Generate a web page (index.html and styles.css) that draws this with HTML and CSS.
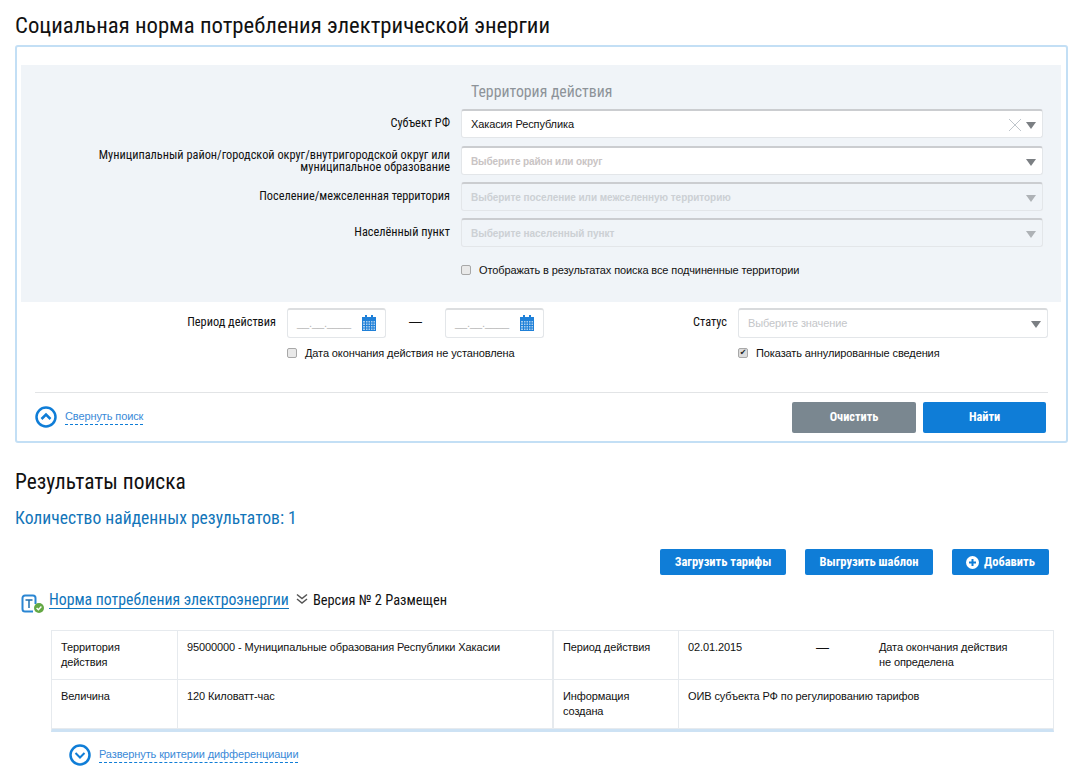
FILE: index.html
```html
<!DOCTYPE html>
<html lang="ru">
<head>
<meta charset="utf-8">
<title>Социальная норма потребления электрической энергии</title>
<link rel="stylesheet" href="styles.css">
</head>
<body>
<h1 class="page-title">Социальная норма потребления электрической энергии</h1>
<section class="search-panel">
  <div class="territory">
    <h2 class="territory-title">Территория действия</h2>
    <div class="form-row">
      <label class="row-label">Субъект РФ</label>
      <div class="select select-value"><span>Хакасия Республика</span>
        <svg class="clear-x" width="14" height="14" viewBox="0 0 14 14"><path d="M1 1l12 12M13 1L1 13" stroke="#bfc6cc" stroke-width="1" fill="none"/></svg>
        <i class="caret"></i></div>
    </div>
    <div class="form-row row-short">
      <label class="row-label label-two">Муниципальный район/городской округ/внутригородской округ или<br>муниципальное образование</label>
      <div class="select select-active"><span>Выберите район или округ</span><i class="caret"></i></div>
    </div>
    <div class="form-row">
      <label class="row-label">Поселение/межселенная территория</label>
      <div class="select select-off"><span>Выберите поселение или межселенную территорию</span><i class="caret caret-off"></i></div>
    </div>
    <div class="form-row">
      <label class="row-label">Населённый пункт</label>
      <div class="select select-off"><span>Выберите населенный пункт</span><i class="caret caret-off"></i></div>
    </div>
    <label class="check check-territory"><i class="box"></i>Отображать в результатах поиска все подчиненные территории</label>
  </div>
  <div class="period-grid">
    <div class="period-col">
      <div class="period-row">
        <label class="period-label">Период действия</label>
        <div class="date"><span class="mask">__.__.____</span>
          <svg class="cal" width="14" height="16" viewBox="0 0 14 16"><path d="M0 2h14v14H0z" fill="#1f80d8"/><path d="M3 0h2v3H3zM9 0h2v3H9z" fill="#1f80d8"/><path d="M1 6h12v9H1z" fill="#a9cdee"/><path d="M1 8h12M1 10.500h12M1 13h12M3.500 6v9M6 6v9M8.500 6v9M11 6v9" stroke="#1f80d8" stroke-width="1"/></svg></div>
        <span class="dash">—</span>
        <div class="date"><span class="mask">__.__.____</span>
          <svg class="cal" width="14" height="16" viewBox="0 0 14 16"><path d="M0 2h14v14H0z" fill="#1f80d8"/><path d="M3 0h2v3H3zM9 0h2v3H9z" fill="#1f80d8"/><path d="M1 6h12v9H1z" fill="#a9cdee"/><path d="M1 8h12M1 10.500h12M1 13h12M3.500 6v9M6 6v9M8.500 6v9M11 6v9" stroke="#1f80d8" stroke-width="1"/></svg></div>
      </div>
      <label class="check check-period"><i class="box"></i>Дата окончания действия не установлена</label>
    </div>
    <div class="status-col">
      <div class="status-row">
        <label class="status-label">Статус</label>
        <div class="select select-status"><span>Выберите значение</span><i class="caret"></i></div>
      </div>
      <label class="check check-status"><i class="box box-on">✔</i>Показать аннулированные сведения</label>
    </div>
  </div>
  <div class="panel-foot">
    <a class="toggle toggle-collapse">
      <svg width="22" height="22" viewBox="0 0 22 22"><circle cx="11" cy="11" r="9.500" fill="none" stroke="#0f7dd7" stroke-width="2.500"/><path d="M6.500 13l4.500-4.500 4.500 4.500" fill="none" stroke="#0f7dd7" stroke-width="2.500"/></svg>
      <span class="toggle-text">Свернуть поиск</span>
    </a>
    <div class="foot-buttons">
      <button class="btn btn-gray">Очистить</button>
      <button class="btn btn-blue">Найти</button>
    </div>
  </div>
</section>
<h2 class="results-title">Результаты поиска</h2>
<p class="results-count">Количество найденных результатов: 1</p>
<div class="actions">
  <button class="btn-small btn-load">Загрузить тарифы</button>
  <button class="btn-small btn-export">Выгрузить шаблон</button>
  <button class="btn-small btn-add">
    <svg width="13" height="13" viewBox="0 0 13 13"><circle cx="6.500" cy="6.500" r="6.500" fill="#fff"/><path d="M6.500 3v7M3 6.500h7" stroke="#0f7dd7" stroke-width="2"/></svg>
    Добавить</button>
</div>
<div class="doc-head">
  <svg class="doc-icon" width="24" height="22" viewBox="0 0 24 22"><path d="M1.500 15V4a2.500 2.500 0 0 1 2.500-2.500h8a2.500 2.500 0 0 1 2.500 2.500v6M12 17.500H4a2.500 2.500 0 0 1-2.500-2.500" fill="none" stroke="#2a86d3" stroke-width="2"/><path d="M4.500 6h7M8 6v8" fill="none" stroke="#1f6fae" stroke-width="1.500"/><circle cx="18" cy="14" r="5" fill="#64a844"/><path d="M15.600 14l1.800 1.800 3-3.200" fill="none" stroke="#fff" stroke-width="1.400"/></svg>
  <a class="doc-link">Норма потребления электроэнергии</a>
  <svg class="chevrons" width="12" height="12" viewBox="0 0 12 12"><path d="M1 1.500l5 4 5-4M1 6l5 4 5-4" fill="none" stroke="#555" stroke-width="1.500"/></svg>
  <span class="doc-version">Версия № 2 Размещен</span>
</div>
<div class="info-table">
  <div class="cell c1">Территория<br>действия</div>
  <div class="cell c2">95000000 - Муниципальные образования Республики Хакасии</div>
  <div class="cell c3">Период действия</div>
  <div class="cell c4 period-cell"><span class="p-from">02.01.2015</span><span class="p-dash">—</span><span>Дата окончания действия<br>не определена</span></div>
  <div class="cell c1">Величина</div>
  <div class="cell c2">120 Киловатт-час</div>
  <div class="cell c3">Информация<br>создана</div>
  <div class="cell c4">ОИВ субъекта РФ по регулированию тарифов</div>
</div>
<a class="toggle toggle-expand">
  <svg width="22" height="22" viewBox="0 0 22 22"><circle cx="11" cy="11" r="9.500" fill="none" stroke="#0f7dd7" stroke-width="2.500"/><path d="M6.500 9l4.500 4.500L15.500 9" fill="none" stroke="#0f7dd7" stroke-width="2"/></svg>
  <span class="toggle-text">Развернуть критерии дифференциации</span>
</a>
</body>
</html>
```
FILE: styles.css
```css
* { box-sizing: border-box; }
html, body { margin: 0; padding: 0; }
body {
  width: 1079px;
  height: 775px;
  overflow: hidden;
  background: #fff;
  color: #111;
  font-family: "Liberation Sans", Arial, sans-serif;
  font-size: 11px;
  letter-spacing: -.11px;
  padding: 12px 0 0 15px;
}
.page-title, .territory-title, .row-label, .period-label, .status-label,
.btn, .results-title, .results-count, .btn-small, .doc-link, .doc-version {
  font-family: Roboto, sans-serif;
  font-stretch: 75%;
}
.page-title {
  margin: 0 0 6px;
  font-weight: 400;
  font-size: 22.750px;
  line-height: 27px;
  letter-spacing: 0;
  color: #111;
}
.search-panel {
  width: 1053px;
  height: 398px;
  border: 2px solid #c3dff5;
  border-radius: 3px;
  padding: 18px 5px 0 4px;
}
.territory {
  height: 237px;
  background: #f0f4f8;
  padding: 17px 18px 0 0;
}
.territory-title {
  margin: 0 0 7px 450px;
  font-weight: 400;
  font-size: 15.800px;
  line-height: 20px;
  color: #8d9399;
  letter-spacing: 0;
}
.form-row {
  display: flex;
  align-items: center;
  height: 29px;
  margin-bottom: 7px;
}
.form-row:first-of-type { margin-bottom: 8px; }
.row-label {
  width: 429px;
  margin-right: 11px;
  flex: none;
  text-align: right;
  font-size: 12.300px;
  line-height: 12px;
  letter-spacing: 0;
  padding-bottom: 1px;
}
.label-two { padding: 1px 0 0; }
.select {
  position: relative;
  flex: 1;
  height: 29px;
  display: flex;
  align-items: center;
  padding: 0 9px;
  background: #fff;
  border: 1px solid #e3e6e9;
  border-top: 2px solid #cbcdd0;
  border-radius: 3px;
  font-size: 11px;
}
.select-active span { color: #c9c4c4; font-weight: 700; font-size: 10px; }
.select-off { background: #f0f4f8; }
.select-off span { color: #ccd0d4; font-weight: 700; font-size: 10px; letter-spacing: -.05px; }
.select-status span { color: #c4c6c9; padding-bottom: 2px; }
.clear-x { position: absolute; right: 20px; top: 7px; }
.caret {
  position: absolute;
  right: 6px;
  top: 11px;
  width: 0;
  height: 0;
  border-left: 5.500px solid transparent;
  border-right: 5.500px solid transparent;
  border-top: 7px solid #7b7f83;
}
.caret-off { border-top-color: #aeb2b6; }
.check { display: flex; align-items: center; font-size: 11px; }
.box {
  width: 10px;
  height: 10px;
  flex: none;
  border: 1px solid #a8a8a8;
  border-radius: 2px;
  background: #e9e9e9;
  margin-right: 8px;
  font: normal 8px/8px "DejaVu Sans", sans-serif;
  color: #222;
  text-align: center;
}
.box-on { background: #dcdcdc; }
.check-territory { margin: 17px 0 0 440px; }
.period-grid {
  display: flex;
  padding-top: 6px;
  height: 90px;
}
.period-col { width: 660px; padding-left: 162px; }
.period-row, .status-row { display: flex; align-items: center; height: 30px; }
.period-label {
  width: 93px;
  margin-right: 11px;
  flex: none;
  white-space: nowrap;
  text-align: right;
  font-size: 12.300px;
  line-height: 14px;
  letter-spacing: 0;
  padding-bottom: 3px;
}
.date {
  position: relative;
  flex: none;
  width: 99px;
  height: 30px;
  border: 1px solid #e3e6e9;
  border-top: 2px solid #dcdee0;
  border-radius: 3px;
  background: #fff;
  padding: 7px 0 0 9px;
  color: #b6b6b6;
  font-size: 11px;
}
.cal { position: absolute; right: 9px; top: 5px; }
.dash { flex: none; width: 59px; text-align: center; font-size: 13px; padding-bottom: 3px; }
.check-period { margin: 9px 0 0 104px; }
.status-col { flex: 1; }
.status-row { width: 367px; }
.status-label {
  width: 46px;
  text-align: right;
  margin-right: 11px;
  flex: none;
  font-size: 12.300px;
  line-height: 14px;
  letter-spacing: 0;
  padding-bottom: 3px;
}
.select-status { height: 30px; border-top-color: #d8dadc; }
.check-status { margin: 9px 0 0 57px; }
.panel-foot {
  margin: 0 13px 0 14px;
  border-top: 1px solid #e2e4e6;
  display: flex;
  justify-content: space-between;
  align-items: flex-start;
  padding-top: 9px;
}
.toggle { display: flex; align-items: center; gap: 8px; color: #3a8ad8; }
.toggle-collapse { margin-top: 4px; }
.toggle-text {
  font-size: 11px;
  line-height: 13px;
  border-bottom: 1px dashed #0f7dd7;
  padding-bottom: 1px;
}
.foot-buttons { display: flex; gap: 7px; margin-right: 2px; }
.btn {
  width: 124px;
  height: 31px;
  border: 0;
  border-radius: 2px;
  color: #fff;
  font-weight: 700;
  font-size: 12.300px;
  line-height: 31px;
  padding: 0;
}
.btn-gray { background: #7a8790; }
.btn-blue { background: #0f7dd7; width: 123px; }
.results-title {
  margin: 26px 0 0;
  font-weight: 400;
  font-size: 21.400px;
  line-height: 26px;
  letter-spacing: 0;
}
.results-count {
  margin: 12px 0 0;
  font-weight: 400;
  font-size: 17.600px;
  line-height: 22px;
  color: #1275b9;
  letter-spacing: 0;
}
.actions {
  display: flex;
  justify-content: flex-end;
  gap: 19px;
  width: 1034px;
  margin-top: 20px;
}
.btn-small {
  height: 26px;
  padding: 0;
  border: 0;
  border-radius: 2px;
  background: #0f7dd7;
  color: #fff;
  font-weight: 700;
  font-size: 12.500px;
  line-height: 26px;
  letter-spacing: 0;
}
.btn-load { width: 126px; }
.btn-export { width: 128px; }
.btn-add { width: 97px; display: flex; align-items: center; justify-content: center; gap: 5px; }
.doc-head { display: flex; align-items: center; height: 24px; margin: 13px 0 0 5px; }
.doc-icon { margin: 10px 5px 0 1px; flex: none; }
.doc-link {
  font-size: 15.750px;
  line-height: 17px;
  color: #0f75bc;
  border-bottom: 1px solid #0f75bc;
  letter-spacing: 0;
  margin-left: -1px;
}
.chevrons { margin: 0 5px 3px 7px; }
.doc-version { font-size: 14.400px; line-height: 18px; letter-spacing: 0; padding-top: 2px; }
.info-table {
  display: grid;
  grid-template-columns: 126px 376px 125px 1fr;
  grid-auto-rows: 49px;
  width: 1003px;
  margin: 18px 0 0 36px;
  border: 1px solid #e6eaee;
  border-bottom: 3px solid #cde2f4;
}
.cell {
  padding: 9px 9px 0;
  line-height: 15px;
  font-size: 11px;
  border-right: 1px solid #e6eaee;
  border-bottom: 1px solid #e6eaee;
}
.c2 { border-right-width: 2px; }
.c4 { border-right: 0; }
.period-cell { display: flex; }
.p-from { width: 128px; }
.p-dash { width: 63px; font-size: 13px; }
.toggle-expand { margin: 12px 0 0 54px; gap: 8px; }
```
